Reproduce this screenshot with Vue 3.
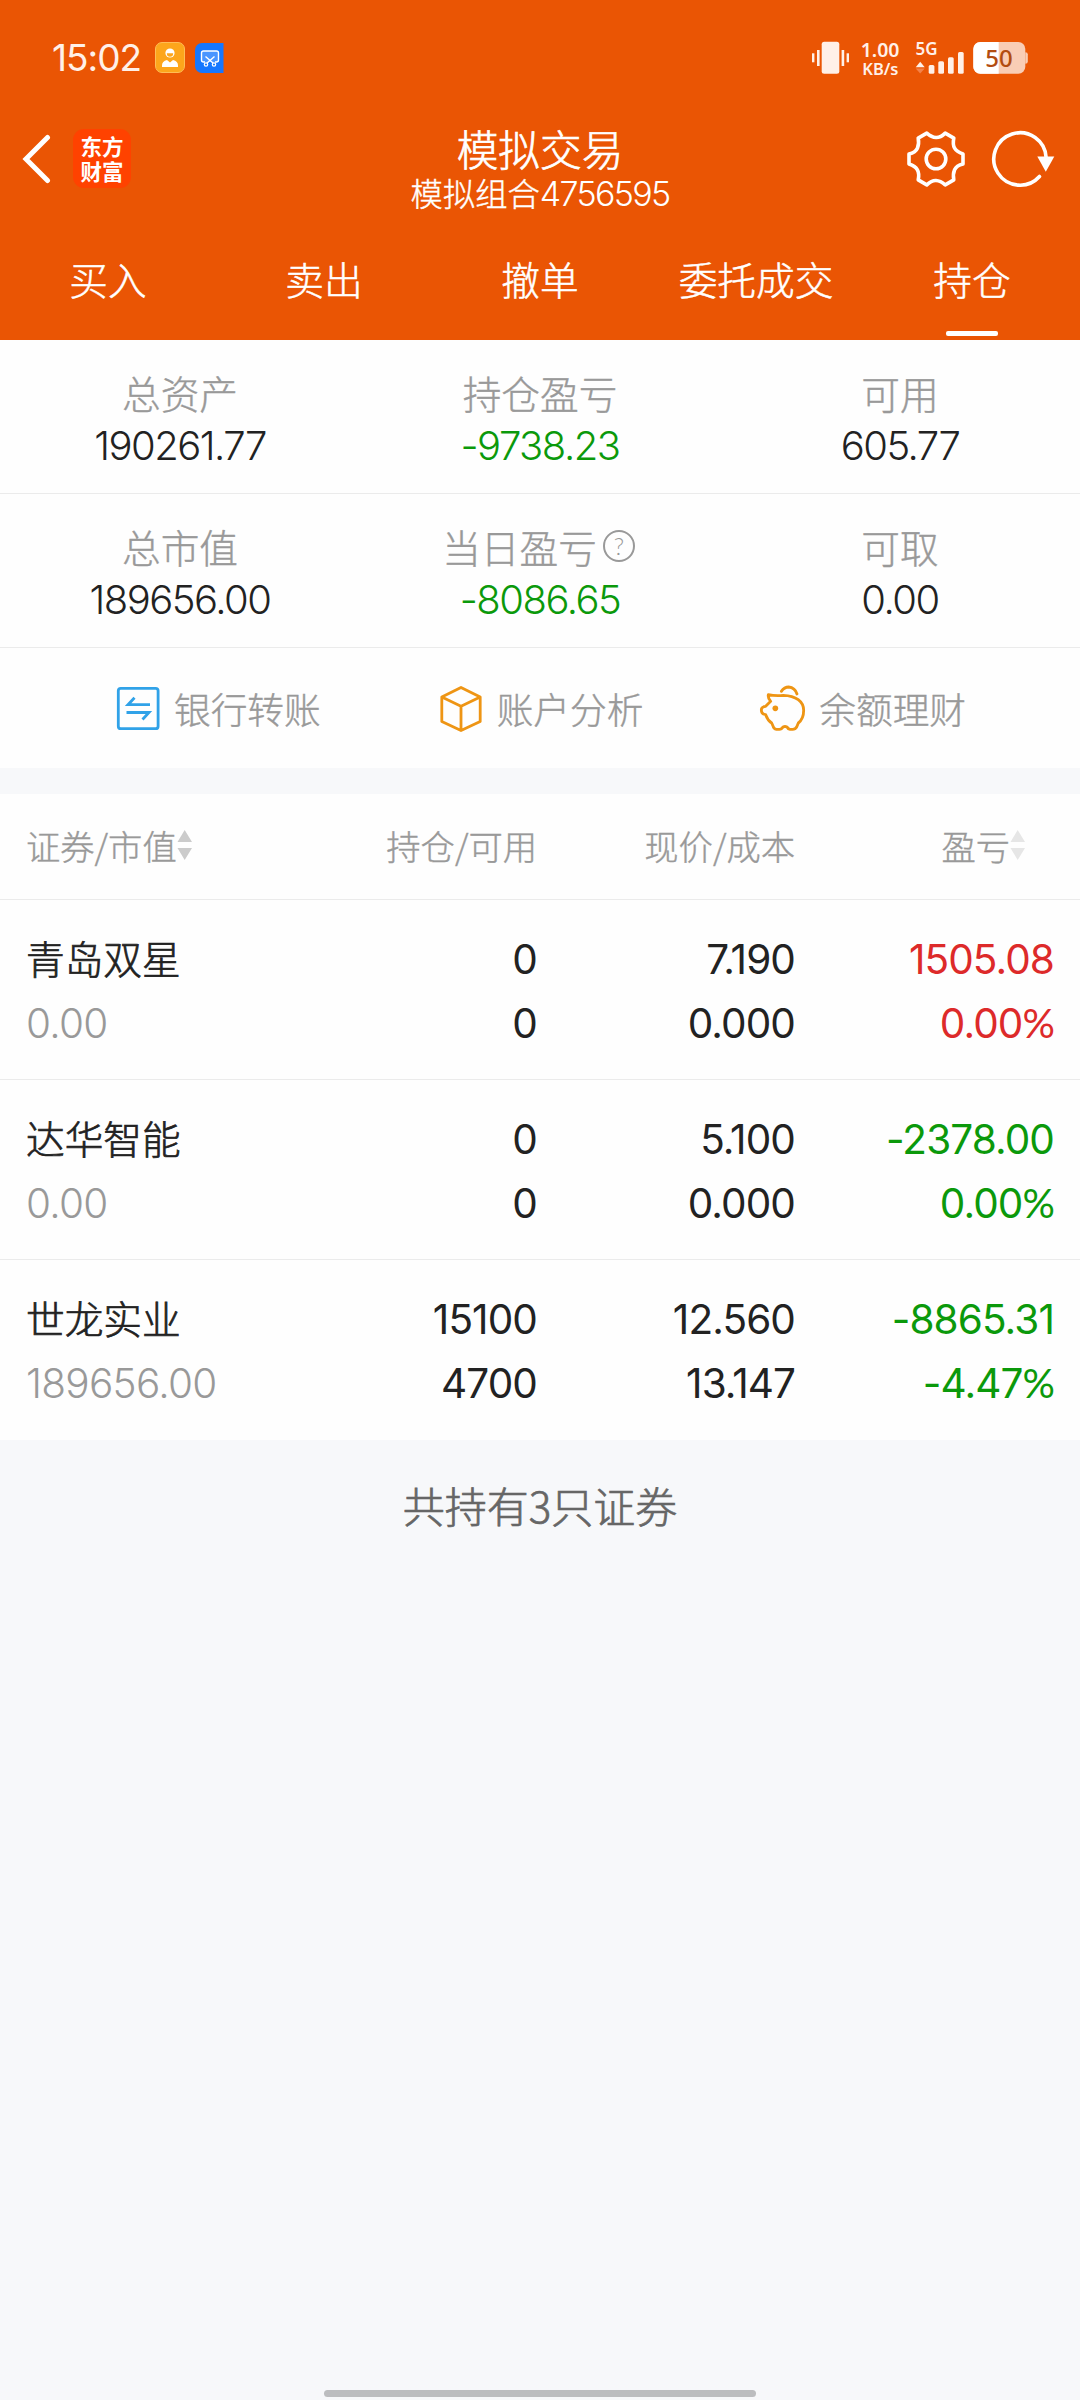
<script setup>
const tabs = ['买入', '卖出', '撤单', '委托成交', '持仓']
const activeTab = '持仓'

const summary = [
  [
    { label: '总资产', value: '190261.77' },
    { label: '持仓盈亏', value: '-9738.23', tone: 'down' },
    { label: '可用', value: '605.77' },
  ],
  [
    { label: '总市值', value: '189656.00' },
    { label: '当日盈亏', value: '-8086.65', tone: 'down', help: true },
    { label: '可取', value: '0.00' },
  ],
]

const holdings = [
  { name: '青岛双星', value: '0.00', held: '0', usable: '0', price: '7.190', cost: '0.000', profit: '1505.08', rate: '0.00', tone: 'up' },
  { name: '达华智能', value: '0.00', held: '0', usable: '0', price: '5.100', cost: '0.000', profit: '-2378.00', rate: '0.00', tone: 'down' },
  { name: '世龙实业', value: '189656.00', held: '15100', usable: '4700', price: '12.560', cost: '13.147', profit: '-8865.31', rate: '-4.47', tone: 'down' },
]
</script>

<template>
  <div class="page">
    <header class="top">
      <div class="status">
        <span class="clock">15:02</span>
        <svg class="status-apps" width="70" height="32" viewBox="154 42 70 32">
          <rect x="155.500" y="42.500" width="29" height="30" rx="6.500" fill="#fda61b" stroke="#ffbd55" />
          <circle cx="170" cy="53" r="4.600" fill="#fff" />
          <path d="M166.800 53.200h6.400a3.200 3.600 0 0 1-6.400 0z" fill="#fda61b" />
          <path d="M162 67v-1.500q0-4.500 5-5.500l3 2.500 3-2.500q5 1 5 5.500V67z" fill="#fff" />
          <path d="M202 43h21.500v30H202a7 7 0 0 1-7-7V50a7 7 0 0 1 7-7z" fill="#1677ff" />
          <path d="M205 62h-1.500q-2 0-2-2v-7q0-2 2-2h13q2 0 2 2v7q0 2-2 2H215" fill="#4a95ff" stroke="#fff" stroke-width="1.400" />
          <path d="M205.500 56.500l8 7M214.500 56.500l-8 7" stroke="#fff" stroke-width="1.400" />
          <circle cx="206" cy="64.500" r="1.700" fill="#1677ff" stroke="#fff" stroke-width="1.200" />
          <circle cx="214" cy="64.500" r="1.700" fill="#1677ff" stroke="#fff" stroke-width="1.200" />
        </svg>
        <svg class="status-sys" width="220" height="54" viewBox="810 30 220 54">
          <g fill="#fff0e8">
            <rect x="821.700" y="41.700" width="17.600" height="32" rx="2.500" />
            <rect x="817" y="50" width="2.600" height="16" />
            <rect x="812" y="53.300" width="2.400" height="9" />
            <rect x="841.600" y="50" width="2.600" height="16" />
            <rect x="846.600" y="53.300" width="2.400" height="9" />
            <text x="899.500" y="57" text-anchor="end" class="net" font-size="19.500">1.00</text>
            <text x="898.500" y="74.500" text-anchor="end" class="net" font-size="16.500">KB/s</text>
            <text x="915.500" y="54.800" class="net" font-size="17">5G</text>
            <path d="M915.700 67.200l4.500-5.400 4.500 5.400z" />
            <rect x="928.700" y="65" width="5.700" height="8.700" rx="1.500" />
            <rect x="938.300" y="61.300" width="5.700" height="12.400" rx="1.500" />
            <rect x="948" y="57.300" width="5.700" height="16.400" rx="1.500" />
            <rect x="958" y="52" width="5.700" height="21.700" rx="1.500" />
          </g>
          <path d="M915.700 68.400l4.500 5.200 4.500-5.200z" fill="#f3824a" />
          <rect x="973.300" y="42" width="52" height="31.700" rx="7" fill="#f9cdb5" />
          <path d="M1025.300 52.300q2.500 0 2.500 2v7.500q0 2-2.500 2z" fill="#f9cdb5" />
          <path d="M980.300 42h18.400v31.700h-18.400a7 7 0 0 1-7-7V49a7 7 0 0 1 7-7z" fill="#fff" />
          <text x="999" y="66.500" text-anchor="middle" class="level">50</text>
        </svg>
      </div>

      <div class="bar">
        <div class="bar-side">
          <svg width="32" height="54" viewBox="0 0 32 54" class="back">
            <path d="M28.500 5.500L7 27 28.500 48.500" fill="none" stroke="#fff" stroke-width="5" stroke-linecap="round" />
          </svg>
          <div class="logo"><span>东方</span><span>财富</span></div>
        </div>
        <div class="titles">
          <div class="title">模拟交易</div>
          <div class="subtitle">模拟组合<span class="num">4756595</span></div>
        </div>
        <div class="bar-side bar-right">
          <svg width="60" height="60" viewBox="-30 -30 60 60" class="gear">
            <path d="M27-5V5Q20.500 6.500 18.600 10.800T17.800 20.900L9.200 25.900Q4.500 21.700 0 21.500T-9.200 25.900L-17.800 20.900Q-16.500 14.500-18.600 10.800T-27 5V-5Q-20.500-6.500-18.600-10.800T-17.800-20.900L-9.200-25.900Q-4.500-21.700 0-21.500T9.200-25.900L17.800-20.900Q16.500-14.500 18.600-10.800T27-5Z" />
            <circle r="9.800" />
          </svg>
          <svg width="64" height="60" viewBox="-29 -30 64 60" class="refresh">
            <path d="M19.500 17.500A26.200 26.200 0 1 1 26.200-1" fill="none" stroke="#fff" stroke-width="3.600" stroke-linecap="round" />
            <path d="M17.300-2.500H34.300L25.800 12.700z" fill="#fff" />
          </svg>
        </div>
      </div>

      <nav class="tabs">
        <div v-for="t in tabs" :key="t" class="tab" :class="{ active: t === activeTab }">{{ t }}</div>
      </nav>
    </header>

    <section v-for="(row, i) in summary" :key="i" class="summary">
      <div v-for="c in row" :key="c.label" class="cell">
        <div class="label">
          {{ c.label }}<svg v-if="c.help" class="help" width="34" height="34" viewBox="0 0 34 34">
            <circle cx="17" cy="17" r="15" fill="none" stroke="#999" stroke-width="2" />
            <text x="17" y="25.500" text-anchor="middle">?</text>
          </svg>
        </div>
        <div class="value num" :class="c.tone">{{ c.value }}</div>
      </div>
    </section>

    <section class="actions">
      <div class="action">
        <svg width="48" height="48" viewBox="0 0 48 48" fill="none" stroke="#30a2e8" stroke-width="2.800">
          <rect x="4.300" y="4.300" width="39.800" height="40.400" rx="2.500" />
          <path d="M36 20.700H14l6.500-7M12.500 28.500H35l-6.500 7" />
        </svg>
        <span>银行转账</span>
      </div>
      <div class="action">
        <svg width="48" height="48" viewBox="0 0 48 48" fill="none" stroke="#ee9514" stroke-width="2.800" stroke-linejoin="round">
          <path d="M24 3.500L43.200 13V37.500L24 46.500 4.800 37.500V13zM4.800 13L24 22.300 43.200 13M24 22.300V46.500" />
        </svg>
        <span>账户分析</span>
      </div>
      <div class="action">
        <svg width="48" height="48" viewBox="114 73 144 144" fill="none" stroke="#ee9514" stroke-width="8.500" stroke-linejoin="round" stroke-linecap="round">
          <path d="M142 105Q162 109 187 107C225 108 248 126 248 152C248 172 240 184 232 190L227 202Q223 209 215 209H207Q201 208 198 202Q192 199 186 202Q182 209 175 209H166Q158 208 156 199L152 190Q140 182 134 165Q121 163 121 151Q121 141 134 140L149 125Q140 115 142 105Z" />
          <path d="M181 95Q190 82 203 82Q222 84 228 103" />
          <circle cx="163" cy="146" r="8.500" fill="#ee9514" stroke="none" />
        </svg>
        <span>余额理财</span>
      </div>
    </section>

    <section class="table">
      <div class="row head">
        <div class="sortable">证券/市值<svg width="16" height="32" viewBox="0 0 16 32" fill="#cbcbcb"><path d="M.5 13L7.700 1 15 13zM.5 19H15L7.700 31z" /></svg></div>
        <div>持仓/可用</div>
        <div>现价/成本</div>
        <div class="sortable last">盈亏<svg width="16" height="32" viewBox="0 0 16 32" fill="#e6e6e6"><path d="M.5 13L7.700 1 15 13zM.5 19H15L7.700 31z" /></svg></div>
      </div>
      <div v-for="h in holdings" :key="h.name" class="row item">
        <div><p class="name">{{ h.name }}</p><p class="num muted">{{ h.value }}</p></div>
        <div class="num"><p>{{ h.held }}</p><p>{{ h.usable }}</p></div>
        <div class="num"><p>{{ h.price }}</p><p>{{ h.cost }}</p></div>
        <div class="num" :class="h.tone"><p>{{ h.profit }}</p><p>{{ h.rate }}<span class="pct">%</span></p></div>
      </div>
    </section>

    <p class="total">共持有3只证券</p>
    <div class="home"></div>
  </div>
</template>

<style>
body {
  margin: 0;
  background: #f7f8fa;
}
</style>

<style scoped>
.page {
  width: 1080px;
  height: 2400px;
  display: flex;
  flex-direction: column;
  background: #f7f8fa;
  font-family: "Noto Sans CJK SC", sans-serif;
  font-weight: 300;
  -webkit-text-stroke: 0.4px;
  color: #222;
  overflow: hidden;
}
svg {
  -webkit-text-stroke: 0;
}
p {
  margin: 0;
}
.num,
.clock {
  font-family: Inter, "Noto Sans CJK SC", sans-serif;
  font-weight: 360;
  letter-spacing: -1px;
  -webkit-text-stroke: 0;
}
.top {
  height: 340px;
  flex: none;
  background: #ea5504;
  color: #fff;
}
.status {
  height: 112px;
  display: flex;
  align-items: flex-start;
  padding: 0 50px 0 52px;
}
.clock {
  width: 102px;
  margin-top: 37px;
  font-size: 37px;
  font-weight: 420;
  line-height: 42px;
  color: #fff0e8;
  white-space: nowrap;
}
.status-apps {
  margin-top: 42px;
}
.status-sys {
  margin: 30px 0 0 auto;
}
.net {
  font-family: "Noto Sans", sans-serif;
  font-weight: 600;
}
.level {
  font-family: "Noto Sans", sans-serif;
  font-weight: 500;
  font-size: 24px;
  fill: #b24c10;
}
.bar {
  height: 112px;
  display: flex;
  align-items: flex-start;
  justify-content: space-between;
}
.bar-side {
  width: 260px;
  display: flex;
  align-items: center;
  padding-top: 17px;
}
.back {
  margin-left: 19px;
}
.logo {
  width: 58px;
  height: 59px;
  margin-left: 22px;
  border-radius: 11px;
  background: #ff4200;
  display: flex;
  flex-direction: column;
  align-items: center;
  justify-content: center;
  font-size: 21.500px;
  line-height: 25px;
  font-weight: 700;
  -webkit-text-stroke: 0;
}
.logo span {
  position: relative;
  top: -1px;
}
.titles {
  text-align: center;
}
.title {
  margin-top: 12px;
  font-size: 41.700px;
  line-height: 48px;
  -webkit-text-stroke: 0.7px;
}
.subtitle {
  margin-top: 1px;
  font-size: 32.300px;
  line-height: 38px;
}
.subtitle .num {
  font-size: 34px;
  letter-spacing: -1.700px;
}
.bar-right {
  justify-content: flex-end;
}
.gear {
  margin-right: 25px;
  fill: none;
  stroke: #fff;
  stroke-width: 3.600;
  stroke-linejoin: round;
}
.refresh {
  margin-right: 25px;
}
.tabs {
  height: 116px;
  display: flex;
}
.tab {
  position: relative;
  flex: 1;
  text-align: center;
  font-size: 38.700px;
  line-height: 108px;
  -webkit-text-stroke: 0.5px;
}
.tab.active::after {
  content: "";
  position: absolute;
  left: 82px;
  bottom: 4px;
  width: 52px;
  height: 5px;
  border-radius: 2px;
  background: #fff;
}
.summary {
  flex: none;
  height: 154px;
  display: flex;
  box-sizing: border-box;
  border-bottom: 1px solid #ebebeb;
  padding-top: 27px;
  background: #fefefe;
}
.cell {
  flex: 1;
  text-align: center;
}
.label {
  display: flex;
  justify-content: center;
  align-items: center;
  height: 50px;
  font-size: 38.700px;
  line-height: 50px;
  color: #999;
}
.help {
  margin: 0 2px 0 5px;
}
.help text {
  font-family: Lato, sans-serif;
  font-size: 24px;
  fill: #999;
}
.value {
  font-size: 40px;
  line-height: 57px;
  letter-spacing: -1.500px;
}
.down {
  color: #0b990b;
}
.up {
  color: #dd2a2a;
}
.actions {
  flex: none;
  height: 120px;
  display: flex;
  padding: 0 56px 0 56px;
  background: #fefefe;
  color: #999;
  font-size: 36.700px;
}
.action {
  flex: 1;
  display: flex;
  align-items: center;
  justify-content: center;
  gap: 12px;
}
.table {
  flex: none;
  margin-top: 26px;
  background: #fefefe;
}
.row {
  box-sizing: border-box;
  display: grid;
  grid-template-columns: 253px 258px 258px 259px;
  padding: 0 26px;
  text-align: right;
  border-bottom: 1px solid #ebebeb;
}
.row > :first-child {
  text-align: left;
}
.head {
  height: 106px;
  padding-bottom: 3px;
  align-items: center;
  font-size: 34.300px;
  color: #999;
}
.sortable {
  display: flex;
  align-items: center;
}
.last {
  justify-content: flex-end;
  padding-right: 28px;
}
.item {
  height: 180px;
  padding-top: 28px;
}
.item .num {
  font-size: 40.500px;
  font-weight: 400;
  letter-spacing: -0.900px;
}
.item:last-child {
  border-bottom: 0;
}
.item p {
  height: 64px;
  line-height: 64px;
}
.item .name {
  font-size: 38.700px;
  line-height: 58px;
  -webkit-text-stroke: 0.7px;
}
.item .muted {
  color: #999;
  font-weight: 360;
  letter-spacing: -0.700px;
}
.pct {
  font-family: Lato, sans-serif;
  font-weight: 400;
  line-height: 1;
}
.total {
  margin-top: 34px;
  text-align: center;
  font-size: 42px;
  line-height: 62px;
  -webkit-text-stroke: 0.7px;
  color: #666;
}
.home {
  width: 432px;
  height: 7px;
  margin: auto auto 3px;
  border-radius: 4px;
  background: #bcbdbf;
}
</style>
